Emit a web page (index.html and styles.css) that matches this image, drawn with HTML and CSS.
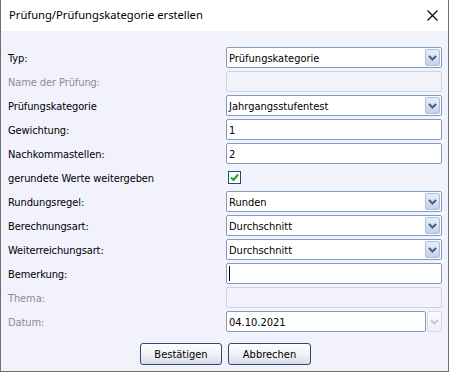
FILE: index.html
```html
<!DOCTYPE html>
<html>
<head>
<meta charset="utf-8">
<link rel="stylesheet" href="styles.css">
</head>
<body>
<div class="window">
  <div class="titlebar">
    <span class="title">Prüfung/Prüfungskategorie erstellen</span>
    <svg class="close" width="11" height="11" viewBox="0 0 11 11"><path d="M0.5 0.5 L10.5 10.5 M10.5 0.5 L0.5 10.5" stroke="#000" stroke-width="1.1" fill="none"/></svg>
  </div>
  <div class="content">
    <div class="form">
      <div class="label">Typ:</div>
      <div class="ctl select"><span class="val">Prüfungskategorie</span><span class="drop"><svg width="9" height="6" viewBox="0 0 9 6"><path d="M1 1 L4.5 4.5 L8 1" stroke="#4a5e88" stroke-width="2" fill="none"/></svg></span></div>

      <div class="label disabled">Name der Prüfung:</div>
      <div class="ctl input off"></div>

      <div class="label">Prüfungskategorie</div>
      <div class="ctl select"><span class="val">Jahrgangsstufentest</span><span class="drop"><svg width="9" height="6" viewBox="0 0 9 6"><path d="M1 1 L4.5 4.5 L8 1" stroke="#4a5e88" stroke-width="2" fill="none"/></svg></span></div>

      <div class="label">Gewichtung:</div>
      <div class="ctl input"><span class="val">1</span></div>

      <div class="label">Nachkommastellen:</div>
      <div class="ctl input"><span class="val">2</span></div>

      <div class="label">gerundete Werte weitergeben</div>
      <div class="cbcell"><span class="checkbox"><svg width="11" height="11" viewBox="0 0 11 11"><path d="M2 5.5 L4.5 8 L9 2.5" stroke="#22a322" stroke-width="2" fill="none"/></svg></span></div>

      <div class="label">Rundungsregel:</div>
      <div class="ctl select"><span class="val">Runden</span><span class="drop"><svg width="9" height="6" viewBox="0 0 9 6"><path d="M1 1 L4.5 4.5 L8 1" stroke="#4a5e88" stroke-width="2" fill="none"/></svg></span></div>

      <div class="label">Berechnungsart:</div>
      <div class="ctl select"><span class="val">Durchschnitt</span><span class="drop"><svg width="9" height="6" viewBox="0 0 9 6"><path d="M1 1 L4.5 4.5 L8 1" stroke="#4a5e88" stroke-width="2" fill="none"/></svg></span></div>

      <div class="label">Weiterreichungsart:</div>
      <div class="ctl select"><span class="val">Durchschnitt</span><span class="drop"><svg width="9" height="6" viewBox="0 0 9 6"><path d="M1 1 L4.5 4.5 L8 1" stroke="#4a5e88" stroke-width="2" fill="none"/></svg></span></div>

      <div class="label">Bemerkung:</div>
      <div class="ctl input"><span class="caret"></span></div>

      <div class="label disabled">Thema:</div>
      <div class="ctl input off"></div>

      <div class="label disabled">Datum:</div>
      <div class="datecell">
        <div class="ctl input date"><span class="val">04.10.2021</span></div>
        <span class="drop off"><svg width="9" height="6" viewBox="0 0 9 6"><path d="M1 1 L4.5 4.5 L8 1" stroke="#c4c6d0" stroke-width="2" fill="none"/></svg></span>
      </div>
    </div>
    <div class="buttons">
      <button class="btn ok">Bestätigen</button>
      <button class="btn cancel">Abbrechen</button>
    </div>
  </div>
</div>
</body>
</html>
```
FILE: styles.css
```css
html, body {
  margin: 0;
  padding: 0;
}
body {
  width: 449px;
  height: 372px;
  overflow: hidden;
  background: #ffffff;
}
.window {
  width: 449px;
  height: 372px;
  box-sizing: border-box;
  border-left: 1px solid #6f6f6f;
  border-right: 1px solid #6f6f6f;
  border-bottom: 1px solid #6f6f6f;
  display: flex;
  flex-direction: column;
  font-family: "DejaVu Sans Condensed", "DejaVu Sans", sans-serif;
  font-size: 11px;
  color: #000;
}
.titlebar {
  height: 31px;
  background: #ffffff;
  display: flex;
  align-items: center;
  justify-content: space-between;
  padding: 0 10px 0 8px;
  flex: none;
}
.title {
  font-family: "Noto Sans", "Open Sans", sans-serif;
  font-size: 11.2px;
  color: #000;
  margin-top: -2px;
}
.close {
  display: block;
  margin-top: -1px;
}
.content {
  flex: 1;
  background: #f2f2fd;
  padding: 16px 6px 0 7px;
  display: flex;
  flex-direction: column;
}
.form {
  display: grid;
  grid-template-columns: 218px 216px;
  grid-auto-rows: 21px;
  row-gap: 3px;
}
.label {
  display: flex;
  align-items: center;
  white-space: nowrap;
  padding-top: 1px;
  letter-spacing: -0.1px;
}
.label.disabled {
  color: #8c8c8c;
}
.ctl {
  box-sizing: border-box;
  height: 21px;
  border: 1px solid #7f9bbf;
  border-radius: 2px;
  background: #ffffff;
  display: flex;
  align-items: center;
  padding-left: 2px;
  position: relative;
}
.ctl .val {
  flex: 1;
  white-space: nowrap;
  padding-top: 1px;
}
.ctl.off {
  background: #f2f2fa;
  border-color: #cfd1dc;
}
.select {
  padding-right: 1px;
}
.drop {
  box-sizing: border-box;
  width: 15px;
  height: 17px;
  border: 1px solid #aebfdc;
  border-radius: 2px;
  background: linear-gradient(#e8edf8, #c3d0ea);
  display: flex;
  align-items: center;
  justify-content: center;
  flex: none;
}
.drop svg {
  display: block;
}
.caret {
  width: 1px;
  height: 15px;
  background: #000;
}
.cbcell {
  display: flex;
  align-items: center;
  padding-left: 2px;
}
.checkbox {
  box-sizing: border-box;
  width: 13px;
  height: 13px;
  border: 1px solid #1d4f7e;
  background: #ffffff;
  display: flex;
  align-items: center;
  justify-content: center;
}
.checkbox svg {
  display: block;
}
.datecell {
  display: flex;
  gap: 1px;
}
.date {
  flex: 1;
}
.drop.off {
  width: 15px;
  height: 21px;
  background: linear-gradient(#fbfbfe, #eeeef6);
  border-color: #d7d9e3;
}
.buttons {
  display: flex;
  justify-content: center;
  gap: 6px;
  margin-top: 11px;
  padding-left: 1px;
}
.btn {
  box-sizing: border-box;
  height: 22px;
  border: 1px solid #2a4877;
  border-radius: 3px;
  background: linear-gradient(#ffffff, #f1f2f6 50%, #d9dce6);
  font-family: "DejaVu Sans Condensed", "DejaVu Sans", sans-serif;
  font-size: 11px;
  color: #000;
  padding: 0;
}
.ok { width: 82px; }
.cancel { width: 83px; }
```
